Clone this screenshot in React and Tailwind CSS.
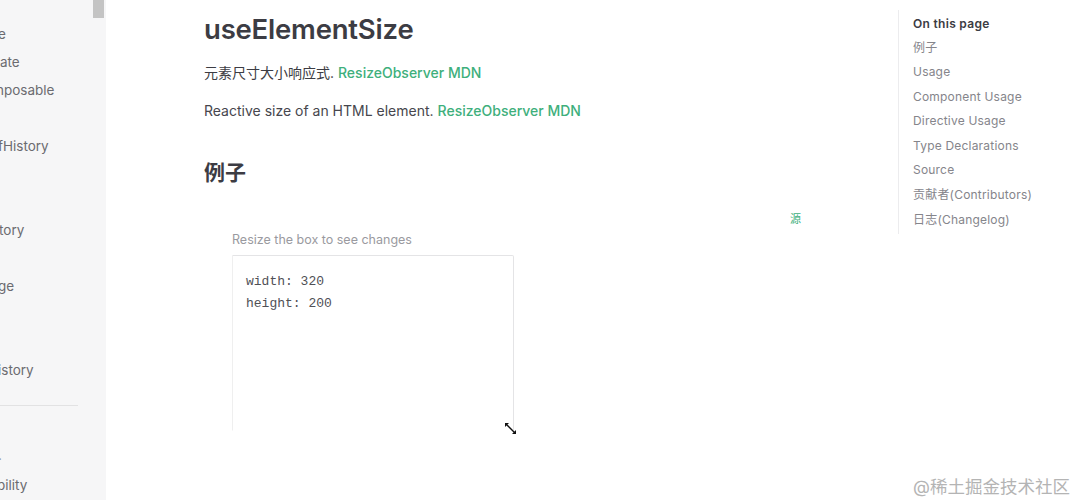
import React from "react";

const sidebarItems = [
  { t: "e", cls: "-ml-[2px]" },
  { t: "ate", cls: "" },
  { t: "nposable", cls: "-ml-[4px]" },
  { t: "", cls: "" },
  { t: "fHistory", cls: "-ml-[2px]" },
  { t: "", cls: "" },
  { t: "", cls: "" },
  { t: "tory", cls: "-ml-[1px]" },
  { t: "", cls: "" },
  { t: "ge", cls: "-ml-[2px]" },
  { t: "", cls: "" },
  { t: "", cls: "" },
  { t: "istory", cls: "-ml-[2px]" },
];

const toc = [
  "例子",
  "Usage",
  "Component Usage",
  "Directive Usage",
  "Type Declarations",
  "Source",
  "贡献者(Contributors)",
  "日志(Changelog)",
];

const sans = "font-['Inter','Noto_Sans_CJK_SC',sans-serif]";

export default function App() {
  return (
    <div className={`flex w-[1079px] h-[500px] overflow-hidden bg-white ${sans}`}>
      {/* Sidebar */}
      <aside className="relative w-[106px] h-[500px] shrink-0 overflow-hidden bg-[#f6f6f7]">
        <div className="absolute left-[93px] top-0 w-[11px] h-[18px] bg-[#c4c4c4]" />
        <div className="pt-[20px]">
          {sidebarItems.map((it, i) => (
            <div
              key={i}
              className={`h-[28px] leading-[28px] text-[13.5px] text-[#6b6b70] whitespace-nowrap ${it.cls}`}
            >
              {it.t}
            </div>
          ))}
          <div className="mt-[21px] w-[78px] h-px bg-[#e2e2e3]" />
          <div className="mt-[35px] h-[28px] leading-[28px] text-[13.5px] text-[#9a9aa0] -ml-[2px]">.</div>
          <div className="mt-[2px] h-[28px] leading-[28px] text-[13.5px] text-[#6b6b70] -ml-[3px]">bility</div>
        </div>
      </aside>

      {/* Main */}
      <main className="w-[792px] shrink-0 pl-[98px]">
        <h1 className="mt-[13px] text-[27.5px] leading-[32px] font-semibold text-[#3c3c43] tracking-[-0.2px]">
          useElementSize
        </h1>
        <p className="mt-[16px] text-[14px] leading-[24px] text-[#3c3c43]">
          元素尺寸大小响应式.{" "}
          <span className="text-[#3eaf7c] font-medium">ResizeObserver MDN</span>
        </p>
        <p className="mt-[14px] text-[14px] leading-[24px] text-[#46464d]">
          Reactive size of an HTML element.{" "}
          <span className="text-[#3eaf7c] font-medium">ResizeObserver MDN</span>
        </p>
        <h2 className="mt-[36px] text-[21px] leading-[28px] font-bold text-[#3c3c43]">例子</h2>

        <div className="mt-[24px] w-[604px] pr-[7px]">
          <div className="flex justify-end">
            <span className="text-[11px] leading-[16px] text-[#3eaf7c]">源</span>
          </div>
          <div className="pl-[28px]">
            <div className="mt-[4px] text-[12.5px] leading-[18px] text-[#9a9aa0]">
              Resize the box to see changes
            </div>
            <div className="relative mt-[6px] w-[282px] h-[176px] border border-[#e4e4e6] border-b-transparent border-l-[#efefef] bg-white pl-[13px] pt-[15px] rounded-tr-[2px]">
              <pre className="font-['Liberation_Mono',monospace] text-[13px] leading-[22px] text-[#505056]">
                {"width: 320\nheight: 200"}
              </pre>
              <svg
                className="absolute right-[-4px] bottom-[-5px]"
                width="13"
                height="13"
                viewBox="0 0 13 13"
              >
                <path d="M1 1 L5 1 L1 5 Z" fill="#111" />
                <path d="M12 12 L8 12 L12 8 Z" fill="#111" />
                <path d="M2 2 L11 11" stroke="#111" strokeWidth="1.3" />
              </svg>
            </div>
          </div>
        </div>
      </main>

      {/* TOC */}
      <nav className="flex-1 pt-[10px]">
        <div className="border-l border-[#ececee] pl-[14px] pt-[4px] pb-[2px]">
          <div className="text-[12px] leading-[20px] font-semibold text-[#3c3c43] tracking-[0.3px]">
            On this page
          </div>
          <div className="mt-[1.5px]">
            {toc.map((t) => (
              <div key={t} className="text-[12px] leading-[24.6px] text-[#85858b] tracking-[0.2px] whitespace-nowrap">
                {t}
              </div>
            ))}
          </div>
        </div>
        <div className="mt-[241px] pl-[15px] text-[17.5px] leading-[24px] text-[#b4b4b4] whitespace-nowrap">
          @稀土掘金技术社区
        </div>
      </nav>
    </div>
  );
}
